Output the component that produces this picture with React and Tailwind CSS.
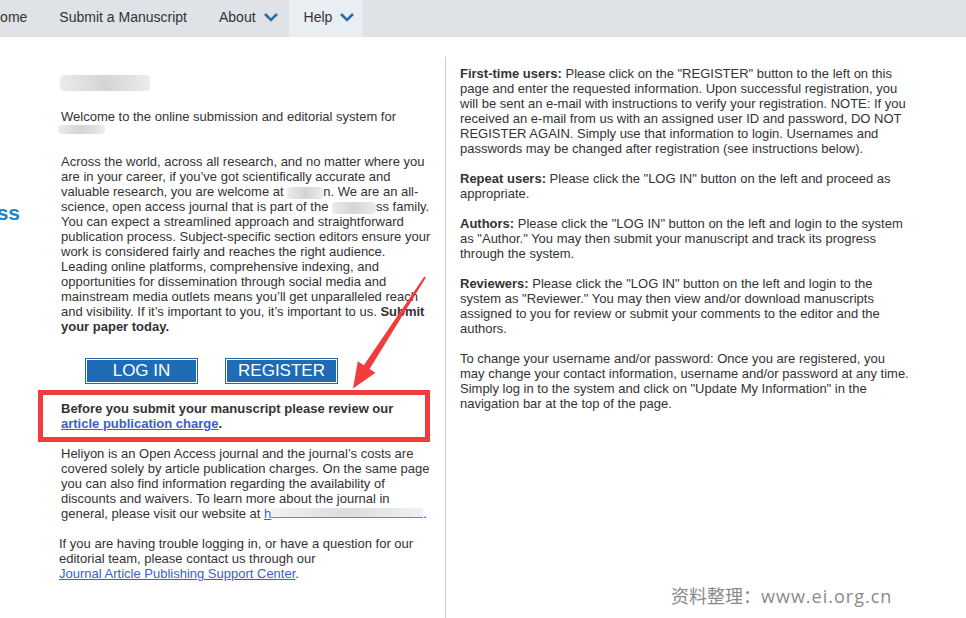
import React from 'react';

const Chevron = () => (
  <svg width="16" height="10" viewBox="0 0 16 10" className="ml-[7px]">
    <polyline points="2,2 8,8 14,2" fill="none" stroke="#2b6ea6" strokeWidth="2.6" />
  </svg>
);

const Blur = ({ className }) => (
  <span
    className={`inline-block align-middle rounded-sm bg-gradient-to-r from-[#ececec] via-[#d4d4d4] to-[#ececec] ${className}`}
  />
);

const NavBar = () => (
  <div className="h-[37px] pb-[3px] bg-[#dfe2e6] flex items-stretch text-[14px] text-[#333] -ml-[26px] shrink-0">
    <div className="flex items-center px-4">Home</div>
    <div className="flex items-center px-4">Submit a Manuscript</div>
    <div className="flex items-center pl-4 pr-[10px]">
      About
      <Chevron />
    </div>
    <div className="flex items-center pl-[15px] pr-[8px] bg-[#e9eef3] -mb-[3px] pb-[3px]">
      Help
      <Chevron />
    </div>
  </div>
);

const Button = ({ children }) => (
  <button className="w-[111px] h-[24px] bg-[#1f6cb5] border border-white shadow-[0_0_0_1px_#2a66a8] text-white text-[17px] leading-[20px]">
    {children}
  </button>
);

const Arrow = () => (
  <svg className="absolute left-0 top-0 pointer-events-none" width="966" height="618">
    <polygon
      points="424.3,276.6 425.9,277.6 369.6,368.9 375.5,372.8 353,388.5 357.8,361.3 363.8,365.2"
      fill="#f03c3c"
    />
  </svg>
);

export default function App() {
  return (
    <div className="relative w-[966px] h-[618px] overflow-hidden bg-white flex flex-col font-['Liberation_Sans',Arial,sans-serif] text-[#333] text-[13px] leading-[15px]">
      <NavBar />

      <div className="flex flex-1 pt-[20px]">
        {/* sidebar with logo, mostly scrolled out of view */}
        <div className="w-[61px] shrink-0 overflow-hidden flex justify-end pr-[41px]">
          <span className="mt-[143px] h-[26px] text-[21px] leading-[26px] font-bold text-[#1a86c8] whitespace-nowrap">
            Press
          </span>
        </div>

        {/* left column */}
        <div className="w-[385px] shrink-0 pr-[13px] border-r border-[#cfcfcf]">
          <div className="mt-[16px] h-[20px] flex items-center">
            <Blur className="w-[90px] h-[16px] -ml-[1px]" />
          </div>

          <p className="mt-[16px]">
            Welcome to the online submission and editorial system for
            <br />
            <Blur className="w-[47px] h-[9px] -ml-[3px] !align-top mt-[1px]" />
          </p>

          <p className="mt-[15px]">
            Across the world, across all research, and no matter where you are in your career, if you’ve got
            scientifically accurate and valuable research, you are welcome at <Blur className="w-[36px] h-[12px]" />n. We
            are an all-science, open access journal that is part of the <Blur className="w-[44px] h-[12px]" />ss family.
            You can expect a streamlined approach and straightforward publication process. Subject-specific section
            editors ensure your work is considered fairly and reaches the right audience. Leading online platforms,
            comprehensive indexing, and opportunities for dissemination through social media and mainstream media outlets
            means you’ll get unparalleled reach and visibility. If it’s important to you, it’s important to us.{' '}
            <b>Submit your paper today.</b>
          </p>

          <div className="mt-[25px] ml-[25px] flex gap-[29px]">
            <Button>LOG IN</Button>
            <Button>REGISTER</Button>
          </div>

          <div className="mt-[7px] -ml-[23px] mr-[2px] border-[5px] border-[#f03c3c] pl-[18px] pt-[6px] pb-[6px] font-bold">
            Before you submit your manuscript please review our{' '}
            <a className="text-[#3b5fc4] underline">article publication charge</a>.
          </div>

          <p className="mt-[4px]">
            Heliyon is an Open Access journal and the journal’s costs are covered solely by article publication charges.
            On the same page you can also find information regarding the availability of discounts and waivers. To learn
            more about the journal in general, please visit our website at{' '}
            <a className="text-[#3b5fc4] underline">
              h
              <span className="inline-block align-baseline w-[152px] h-[10px] border-b border-[#6c87d0] bg-gradient-to-r from-[#f2f2f2] via-[#dcdcdc] to-[#f2f2f2]" />
            </a>
            .
          </p>

          <p className="mt-[15px] -ml-[2px]">
            If you are having trouble logging in, or have a question for our editorial team, please contact us through
            our <br />
            <a className="text-[#3b5fc4] underline">Journal Article Publishing Support Center</a>.
          </p>
        </div>

        {/* right column */}
        <div className="w-[452px] ml-[14px] pt-[9px]">
          <p>
            <b>First-time users:</b> Please click on the "REGISTER" button to the left on this page and enter the
            requested information. Upon successful registration, you will be sent an e-mail with instructions to verify
            your registration. NOTE: If you received an e-mail from us with an assigned user ID and password, DO NOT
            REGISTER AGAIN. Simply use that information to login. Usernames and passwords may be changed after
            registration (see instructions below).
          </p>
          <p className="mt-[15px]">
            <b>Repeat users:</b> Please click the "LOG IN" button on the left and proceed as appropriate.
          </p>
          <p className="mt-[15px]">
            <b>Authors:</b> Please click the "LOG IN" button on the left and login to the system as "Author." You may
            then submit your manuscript and track its progress through the system.
          </p>
          <p className="mt-[15px]">
            <b>Reviewers:</b> Please click the "LOG IN" button on the left and login to the system as "Reviewer." You
            may then view and/or download manuscripts assigned to you for review or submit your comments to the editor
            and the authors.
          </p>
          <p className="mt-[15px]">
            To change your username and/or password: Once you are registered, you may change your contact information,
            username and/or password at any time. Simply log in to the system and click on "Update My Information" in
            the navigation bar at the top of the page.
          </p>
        </div>
      </div>

      <Arrow />

      <div className="absolute left-[671px] top-[584px] text-[18px] leading-[24px] text-[#8a8a8a] font-['Open_Sans','Noto_Sans_CJK_SC',sans-serif] whitespace-nowrap">
        资料整理：<span className="tracking-[1px]">www.ei.org.cn</span>
      </div>
    </div>
  );
}
